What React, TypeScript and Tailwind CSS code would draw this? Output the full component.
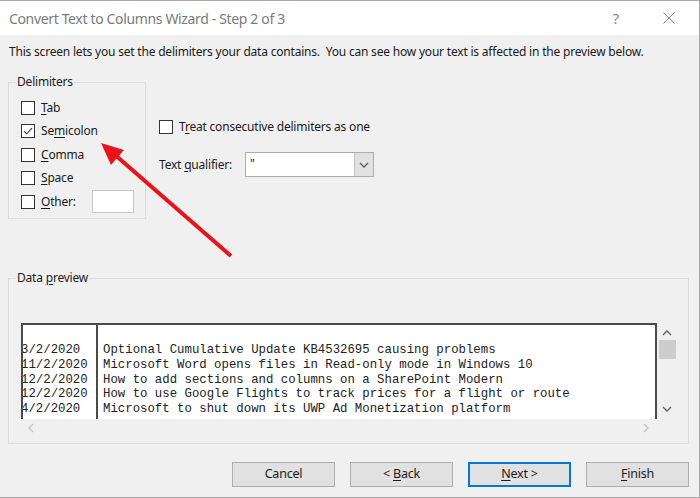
import React from 'react';

const ui = "font-['Noto_Sans',sans-serif]";

function Box({ checked = false }: { checked?: boolean }) {
  return (
    <span className="w-[14px] h-[14px] shrink-0 border border-[#333333] bg-white flex items-center justify-center">
      {checked && (
        <svg width={12} height={12} viewBox="0 0 12 12" fill="none">
          <path d="M2 6.2L4.6 8.8L10 3.2" stroke="#333" strokeWidth={1.1} />
        </svg>
      )}
    </span>
  );
}

function Option({ pre, u, post, checked }: { pre: string; u: string; post: string; checked?: boolean }) {
  return (
    <div className="h-[23.5px] flex items-center gap-[6px]">
      <Box checked={checked} />
      <span>
        {pre}
        <span className="underline underline-offset-2">{u}</span>
        {post}
      </span>
    </div>
  );
}

function Chevron({ dir, color }: { dir: 'up' | 'down' | 'left' | 'right'; color: string }) {
  const d = {
    up: 'M1 6L5 2L9 6',
    down: 'M1 2L5 6L9 2',
    left: 'M6 1L2 5L6 9',
    right: 'M2 1L6 5L2 9',
  }[dir];
  const w = dir === 'up' || dir === 'down' ? 10 : 8;
  const h = dir === 'up' || dir === 'down' ? 8 : 10;
  return (
    <svg width={w} height={h} viewBox={`0 0 ${w} ${h}`} fill="none">
      <path d={d} stroke={color} strokeWidth={1.3} />
    </svg>
  );
}

const rows = [
  ['3/2/2020', 'Optional Cumulative Update KB4532695 causing problems'],
  ['11/2/2020', 'Microsoft Word opens files in Read-only mode in Windows 10'],
  ['12/2/2020', 'How to add sections and columns on a SharePoint Modern'],
  ['12/2/2020', 'How to use Google Flights to track prices for a flight or route'],
  ['4/2/2020', 'Microsoft to shut down its UWP Ad Monetization platform'],
];

function Button({ children, primary }: { children: React.ReactNode; primary?: boolean }) {
  return (
    <button
      className={
        'w-[103px] h-[25px] bg-[#e1e1e1] text-[12.5px] tracking-[-0.2px] text-[#1a1a1a] flex items-center justify-center ' +
        (primary ? 'border-2 border-[#0078d7]' : 'border border-[#adadad]')
      }
    >
      {children}
    </button>
  );
}

export default function App() {
  return (
    <div className={`relative w-[700px] h-[498px] bg-[#f0f0f0] border-t border-r border-b border-[#a8a8a8] flex flex-col text-[12px] tracking-[-0.2px] text-[#1a1a1a] ${ui}`}>
      {/* title bar */}
      <div className="h-[34px] bg-white flex items-center pl-[9px] pr-[24px] shrink-0">
        <span className="text-[14px] tracking-[-0.35px] text-[#7a7a7a]">Convert Text to Columns Wizard - Step 2 of 3</span>
        <span className="ml-auto text-[15px] text-[#8a8a8a] mr-[44px]">?</span>
        <svg width={12} height={12} viewBox="0 0 12 12" fill="none">
          <path d="M0.5 0.5L11.5 11.5M11.5 0.5L0.5 11.5" stroke="#8a8a8a" strokeWidth={1} />
        </svg>
      </div>

      <p className="mt-[9px] ml-[9px] leading-[16px]">
        This screen lets you set the delimiters your data contains.&nbsp; You can see how your text is affected in the preview below.
      </p>

      {/* delimiters + options */}
      <div className="mt-[14px] flex">
        <fieldset className="ml-[8px] w-[138px] h-[145px] border border-[#dcdcdc] pl-[12px] pt-[6px]">
          <legend className="-ml-[5px] px-[1px] leading-[16px]">Delimiters</legend>
          <Option pre="" u="T" post="ab" />
          <Option pre="Se" u="m" post="icolon" checked />
          <Option pre="" u="C" post="omma" />
          <Option pre="" u="S" post="pace" />
          <div className="h-[23.5px] flex items-center gap-[6px]">
            <Box />
            <span className="w-[45px]">
              <span className="underline underline-offset-2">O</span>ther:
            </span>
            <span className="w-[42px] h-[23px] bg-white border border-[#c8c8c8]" />
          </div>
        </fieldset>

        <div className="ml-[13px] pt-[45px] flex flex-col">
          <div className="h-[16px] flex items-center gap-[6px]">
            <Box />
            <span>
              T<span className="underline underline-offset-2">r</span>eat consecutive delimiters as one
            </span>
          </div>
          <div className="mt-[17px] flex items-center">
            <span className="w-[86px]">
              Text <span className="underline underline-offset-2">q</span>ualifier:
            </span>
            <div className="w-[129px] h-[25px] bg-white border border-[#adadad] flex">
              <span className="flex-1 pl-[4px] leading-[22px]">"</span>
              <span className="w-[19px] bg-[#e1e1e1] border-l border-[#c4c4c4] flex items-center justify-center">
                <Chevron dir="down" color="#606060" />
              </span>
            </div>
          </div>
        </div>
      </div>

      {/* data preview */}
      <fieldset className="mt-[51px] ml-[8px] w-[681px] h-[174px] border border-[#dcdcdc] pl-[12px] pt-[37px]">
        <legend className="-ml-[5px] px-[1px] leading-[16px]">
          Data <span className="underline underline-offset-2">p</span>review
        </legend>
        <div className="grid grid-cols-[636px_20px] grid-rows-[96px_18px]">
          <div className="bg-white border-t-2 border-l-2 border-r-2 border-[#4a4a4a] overflow-hidden flex font-['Liberation_Mono',monospace] text-[12.35px] tracking-normal leading-[14.75px] text-[#222]">
            <div className="w-[77px] shrink-0 border-r-2 border-[#4a4a4a] pt-[18px] -ml-[2px]">
              {rows.map(r => (
                <div key={r[0] + r[1]} className="whitespace-pre">{r[0]}</div>
              ))}
            </div>
            <div className="pt-[18px] pl-[5px]">
              {rows.map(r => (
                <div key={r[1]} className="whitespace-pre">{r[1]}</div>
              ))}
            </div>
          </div>
          <div className="flex flex-col items-center pt-[6px] pb-[6px]">
            <Chevron dir="up" color="#606060" />
            <div className="mt-[3px] w-[17px] h-[19px] bg-[#cdcdcd]" />
            <div className="mt-auto">
              <Chevron dir="down" color="#606060" />
            </div>
          </div>
          <div className="flex items-center justify-between pl-[6px] pr-[7px]">
            <Chevron dir="left" color="#c2c2c2" />
            <Chevron dir="right" color="#c2c2c2" />
          </div>
          <div />
        </div>
      </fieldset>

      {/* buttons */}
      <div className="mt-[18px] flex justify-end gap-[15px] pr-[10px]">
        <Button>Cancel</Button>
        <Button>
          &lt;&nbsp;<span className="underline underline-offset-2">B</span>ack
        </Button>
        <Button primary>
          <span className="underline underline-offset-2">N</span>ext &gt;
        </Button>
        <Button>
          <span className="underline underline-offset-2">F</span>inish
        </Button>
      </div>

      {/* red annotation arrow */}
      <svg className="absolute left-0 top-0 pointer-events-none" width={700} height={498} viewBox="0 0 700 498">
        <line x1={231} y1={255} x2={114} y2={153} stroke="#e8141c" strokeWidth={4} />
        <polygon points="101,142 124,149 111,164" fill="#e8141c" />
      </svg>
    </div>
  );
}
